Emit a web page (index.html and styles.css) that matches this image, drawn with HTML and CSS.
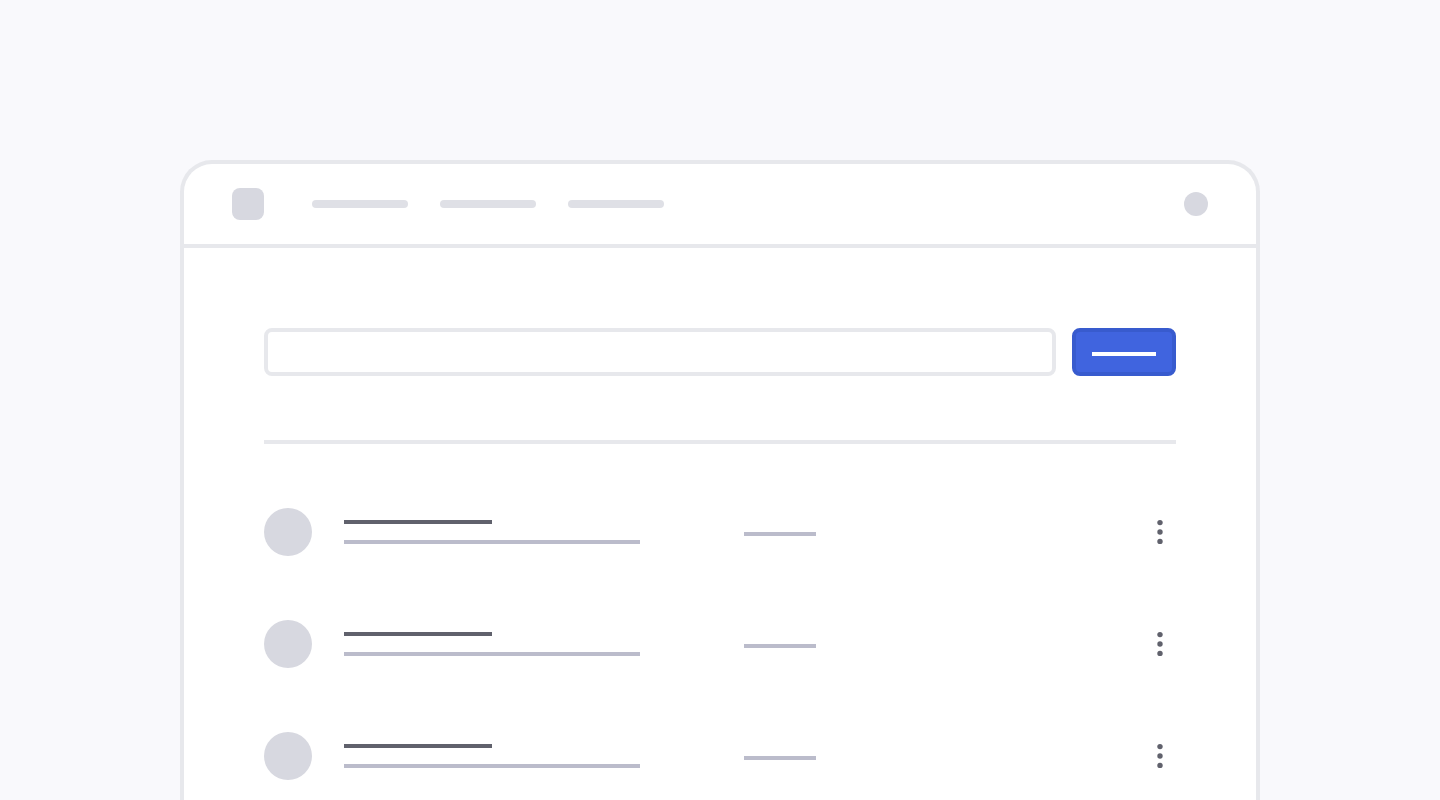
FILE: index.html
```html
<!DOCTYPE html>
<html lang="en">
<head>
    <meta charset="UTF-8">
    <meta name="viewport" content="width=device-width, initial-scale=1.0">
    <title>List Wireframe</title>
    <link rel="stylesheet" href="styles.css">
</head>
<body>
    <div class="window">
        <header class="topbar">
            <a href="#" class="logo" aria-label="Home"></a>
            <nav class="nav">
                <a href="#" aria-label="First section"></a>
                <a href="#" aria-label="Second section"></a>
                <a href="#" aria-label="Third section"></a>
            </nav>
            <button type="button" class="account" aria-label="Account"></button>
        </header>

        <main class="content">
            <form class="search">
                <input type="text" name="search" aria-label="Search">
                <button type="submit" aria-label="Submit"><span class="line"></span></button>
            </form>

            <ul class="list">
                <li class="row">
                    <span class="avatar"></span>
                    <div class="details">
                        <span class="line name"></span>
                        <span class="line info"></span>
                    </div>
                    <span class="line status"></span>
                    <button type="button" class="more" aria-label="More options">
                        <svg width="32" height="32" viewBox="0 0 32 32" fill="currentColor">
                            <circle cx="16" cy="6.6" r="2.7"/>
                            <circle cx="16" cy="16" r="2.7"/>
                            <circle cx="16" cy="25.4" r="2.7"/>
                        </svg>
                    </button>
                </li>
                <li class="row">
                    <span class="avatar"></span>
                    <div class="details">
                        <span class="line name"></span>
                        <span class="line info"></span>
                    </div>
                    <span class="line status"></span>
                    <button type="button" class="more" aria-label="More options">
                        <svg width="32" height="32" viewBox="0 0 32 32" fill="currentColor">
                            <circle cx="16" cy="6.6" r="2.7"/>
                            <circle cx="16" cy="16" r="2.7"/>
                            <circle cx="16" cy="25.4" r="2.7"/>
                        </svg>
                    </button>
                </li>
                <li class="row">
                    <span class="avatar"></span>
                    <div class="details">
                        <span class="line name"></span>
                        <span class="line info"></span>
                    </div>
                    <span class="line status"></span>
                    <button type="button" class="more" aria-label="More options">
                        <svg width="32" height="32" viewBox="0 0 32 32" fill="currentColor">
                            <circle cx="16" cy="6.6" r="2.7"/>
                            <circle cx="16" cy="16" r="2.7"/>
                            <circle cx="16" cy="25.4" r="2.7"/>
                        </svg>
                    </button>
                </li>
            </ul>
        </main>
    </div>
</body>
</html>
```

FILE: styles.css
```css
* {
    box-sizing: border-box;
}

body {
    display: flex;
    flex-direction: column;
    align-items: center;
    min-height: 100vh;
    margin: 0;
    padding-top: 160px;
    font-family: "Liberation Sans", Arial, sans-serif;
    background-color: #f9f9fc;
}

button {
    padding: 0;
    border: none;
    cursor: pointer;
}

.window {
    flex: 1;
    width: 100%;
    max-width: 1080px;
    background-color: white;
    border: 4px solid #e7e8ec;
    border-bottom: none;
    border-radius: 32px 32px 0 0;
}

.topbar {
    display: flex;
    align-items: center;
    gap: 48px;
    padding: 24px 48px;
    border-bottom: 4px solid #e7e8ec;
}

.logo {
    width: 32px;
    height: 32px;
    background-color: #d7d8e0;
    border-radius: 8px;
}

.nav {
    display: flex;
    gap: 32px;
}

.nav a {
    width: 96px;
    height: 8px;
    background-color: #dfe0e6;
    border-radius: 4px;
}

.account {
    width: 24px;
    height: 24px;
    margin-left: auto;
    background-color: #d7d8e0;
    border-radius: 50%;
}

.content {
    padding: 80px 80px 0;
}

.search {
    display: flex;
    gap: 16px;
    padding-bottom: 64px;
    border-bottom: 4px solid #e7e8ec;
}

.search input {
    flex: 1;
    min-width: 0;
    height: 48px;
    padding: 0 16px;
    font-size: 16px;
    background-color: white;
    border: 4px solid #e7e8ec;
    border-radius: 8px;
}

.search button {
    display: flex;
    align-items: center;
    justify-content: center;
    width: 104px;
    background-color: #4064df;
    border: 4px solid #385bce;
    border-radius: 8px;
}

.search button:hover {
    background-color: #385bce;
}

/* text placeholder, the stroke sits on the baseline */
.line {
    display: block;
    height: 8px;
    border-bottom: 4px solid #bbbccb;
}

.search .line {
    width: 64px;
    border-color: white;
}

.list {
    display: flex;
    flex-direction: column;
    gap: 64px;
    margin: 64px 0 0;
    padding: 0;
    list-style: none;
}

.row {
    display: grid;
    grid-template-columns: 48px 368px 1fr 32px;
    align-items: center;
    column-gap: 32px;
}

.avatar {
    width: 48px;
    height: 48px;
    background-color: #d7d8e0;
    border-radius: 50%;
}

.details {
    display: flex;
    flex-direction: column;
    gap: 12px;
    padding-bottom: 4px;
}

.name {
    width: 148px;
    border-color: #60616c;
}

.info {
    width: 296px;
}

.status {
    width: 72px;
}

.more {
    display: flex;
    color: #60616c;
    background: none;
}
```
